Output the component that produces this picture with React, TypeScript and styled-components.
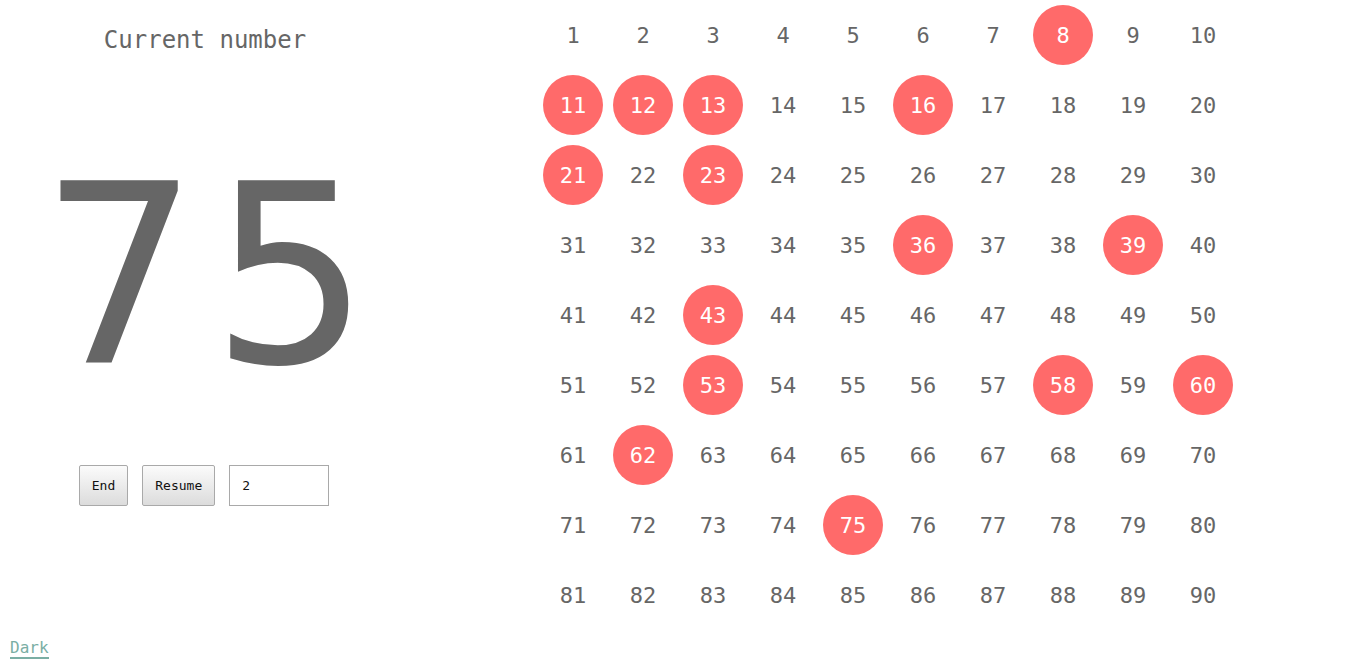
import * as React from 'react';
import styled, { createGlobalStyle } from 'styled-components';

const drawn = [8, 11, 12, 13, 16, 21, 23, 36, 39, 43, 53, 58, 60, 62, 75];

const GlobalStyle = createGlobalStyle`
body {
  margin: 0;
  background: #ffffff;
  font-family: "DejaVu Sans Mono", "Liberation Mono", monospace;
  color: #666666;
}
`;

const Page = styled.div`
width: 1366px;
height: 667px;
display: flex;
flex-direction: column;
`;

const Main = styled.div`
display: flex;
gap: 128px;
`;

const LeftPanel = styled.div`
width: 410px;
display: flex;
flex-direction: column;
align-items: center;
padding-top: 26px;
`;

const Title = styled.div`
font-size: 24px;
line-height: 28px;
color: #666666;
`;

const BigNumber = styled.div`
font-family: "DejaVu Sans", "Open Sans", sans-serif;
font-size: 250px;
line-height: 300px;
height: 300px;
margin-top: 72px;
padding-left: 12px;
color: #666666;
letter-spacing: 12px;
`;

const Controls = styled.div`
display: flex;
gap: 14px;
margin-top: 39px;
margin-left: -2px;
`;

const Button = styled.button`
height: 41px;
padding: 0 12px;
font-family: "DejaVu Sans Mono", monospace;
font-size: 13px;
color: #111111;
background: linear-gradient(#fbfbfb, #dcdcdc);
border: 1px solid #a9a9a9;
border-radius: 2px;
`;

const NumberInput = styled.input`
width: 100px;
height: 41px;
box-sizing: border-box;
padding: 0 12px;
font-family: "DejaVu Sans Mono", monospace;
font-size: 13px;
color: #111111;
border: 1px solid #a9a9a9;
outline: none;
`;

const Board = styled.div`
display: grid;
grid-template-columns: repeat(10, 70px);
grid-auto-rows: 70px;
`;

const Cell = styled.div<{ $on: boolean }>`
width: 60px;
height: 60px;
margin: 5px;
border-radius: 50%;
display: flex;
align-items: center;
justify-content: center;
font-size: 22px;
background: ${p => (p.$on ? '#ff6a6a' : 'transparent')};
color: ${p => (p.$on ? '#ffffff' : '#666666')};
`;

const Footer = styled.div`
padding: 8px 0 0 10px;
`;

const ThemeLink = styled.a`
font-size: 16px;
color: #7aaea4;
text-decoration: none;
border-bottom: 2px solid #7aaea4;
cursor: pointer;
`;

export default function App() {
  const [count, setCount] = React.useState('2');
  const cells = Array.from({ length: 90 }, (_, i) => i + 1);
  return (
    <Page>
      <GlobalStyle />
      <Main>
        <LeftPanel>
          <Title>Current number</Title>
          <BigNumber>75</BigNumber>
          <Controls>
            <Button>End</Button>
            <Button>Resume</Button>
            <NumberInput value={count} onChange={e => setCount(e.target.value)} />
          </Controls>
        </LeftPanel>
        <Board>
          {cells.map(n => (
            <Cell key={n} $on={drawn.includes(n)}>{n}</Cell>
          ))}
        </Board>
      </Main>
      <Footer>
        <ThemeLink>Dark</ThemeLink>
      </Footer>
    </Page>
  );
}
